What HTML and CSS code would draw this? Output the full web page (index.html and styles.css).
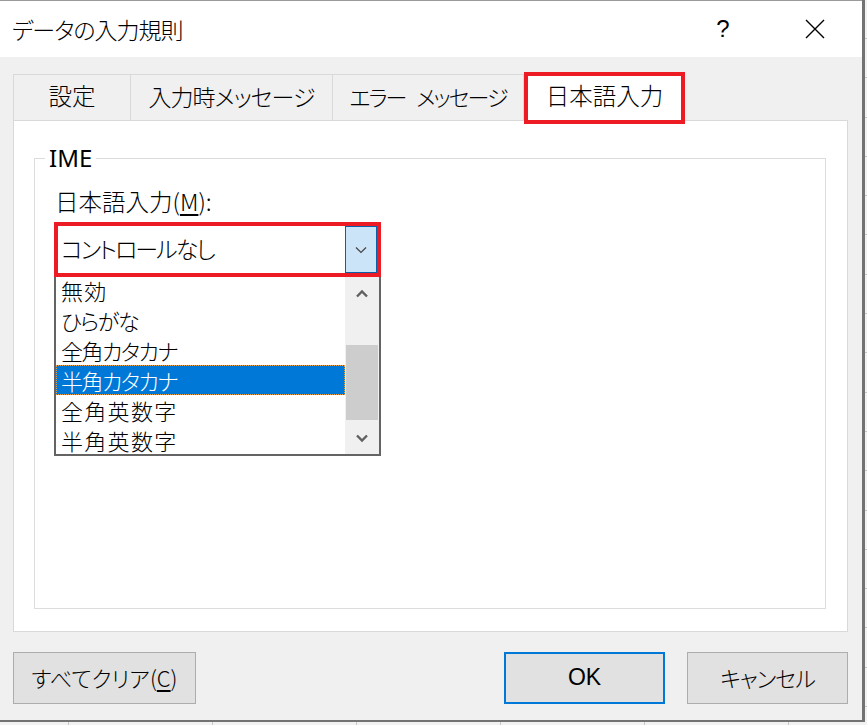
FILE: index.html
```html
<!DOCTYPE html>
<html lang="ja">
<head>
<meta charset="utf-8">
<title>データの入力規則</title>
<link rel="stylesheet" href="styles.css">
</head>
<body>
<div class="dialog">
  <div class="titlebar">
    <div class="title">データの入力規則</div>
    <div class="help">?</div>
    <div class="close">
      <svg width="20" height="20" viewBox="0 0 20 20"><path d="M1 1 L19 19 M19 1 L1 19" stroke="#000" stroke-width="1.4" fill="none"/></svg>
    </div>
  </div>
  <div class="body">
    <div class="tabs">
      <div class="tab tab-1">設定</div>
      <div class="tab tab-2">入力時メッセージ</div>
      <div class="tab tab-3">エラー メッセージ</div>
      <div class="tab tab-active">日本語入力</div>
    </div>
    <div class="panel">
      <div class="group">
        <div class="legend">IME</div>
        <div class="field-label">日本語入力(<u>M</u>):</div>
        <div class="combo">
          <div class="combo-text">コントロールなし</div>
          <div class="combo-btn">
            <svg width="12" height="8" viewBox="0 0 12 8"><path d="M1 1.5 L6 6.5 L11 1.5" stroke="#444" stroke-width="1.2" fill="none"/></svg>
          </div>
        </div>
        <div class="list">
          <div class="items">
            <div class="item">無効</div>
            <div class="item kana">ひらがな</div>
            <div class="item kana">全角カタカナ</div>
            <div class="item kana selected">半角カタカナ</div>
            <div class="item">全角英数字</div>
            <div class="item">半角英数字</div>
          </div>
          <div class="scrollbar">
            <div class="arrow">
              <svg width="14" height="9" viewBox="0 0 14 9"><path d="M2 7.5 L7 2.5 L12 7.5" stroke="#606060" stroke-width="2.4" fill="none"/></svg>
            </div>
            <div class="track">
              <div class="thumb"></div>
            </div>
            <div class="arrow">
              <svg width="14" height="9" viewBox="0 0 14 9"><path d="M2 1.5 L7 6.5 L12 1.5" stroke="#606060" stroke-width="2.4" fill="none"/></svg>
            </div>
          </div>
        </div>
      </div>
    </div>
    <div class="buttons">
      <div class="btn btn-clear">すべてクリア(<u>C</u>)</div>
      <div class="spacer"></div>
      <div class="btn btn-ok">OK</div>
      <div class="btn btn-cancel">キャンセル</div>
    </div>
  </div>
</div>
</body>
</html>
```
FILE: styles.css
```css
html, body {
  margin: 0;
  padding: 0;
}
body {
  width: 867px;
  height: 725px;
  overflow: hidden;
  background-color: #f2f2f2;
  background-image:
    repeating-linear-gradient(90deg, transparent 0 68px, #c8c8c8 68px 69px, transparent 69px 144px),
    repeating-linear-gradient(180deg, transparent 0 38px, #c8c8c8 38px 39px, transparent 39px 39.3px);
  font-family: "Noto Sans CJK JP", "Noto Sans", sans-serif;
  font-feature-settings: "palt";
  font-weight: 300;
  color: #000;
}
.dialog {
  width: 862px;
  height: 720px;
  border-right: 3px solid #737373;
  border-bottom: 2px solid #737373;
  display: flex;
  flex-direction: column;
  background: #f0f0f0;
}
.titlebar {
  height: 57px;
  flex: none;
  background: #fff;
  display: flex;
  align-items: center;
  padding-left: 12px;
  box-sizing: border-box;
  border-top: 1px solid #9a9a9a;
}
.title {
  font-size: 23px;
  letter-spacing: -1px;
  line-height: 1;
  flex: 1;
  padding-top: 1px;
}
.help {
  font-family: "Liberation Sans", sans-serif;
  font-weight: 400;
  font-size: 24px;
  width: 20px;
  text-align: center;
  margin-right: 72px;
}
.close {
  width: 20px;
  height: 20px;
  margin-right: 37px;
  display: flex;
}
.body {
  flex: 1;
  display: flex;
  flex-direction: column;
  padding: 0 14px 0 13px;
}
.tabs {
  display: flex;
  margin-top: 15px;
  height: 48px;
  align-items: flex-end;
  position: relative;
  z-index: 1;
}
.tab {
  height: 46px;
  box-sizing: border-box;
  border-top: 1px solid #d9d9d9;
  border-left: 1px solid #d9d9d9;
  display: flex;
  align-items: center;
  justify-content: center;
  font-size: 23.5px;
  line-height: 1;
  background: #f0f0f0;
  padding-bottom: 3px;
}
.tab-1 { width: 117px; }
.tab-2 { width: 202px; font-size: 23px; letter-spacing: -1px; }
.tab-3 {
  width: 192px;
  border-right: 1px solid #d9d9d9;
  font-size: 22px;
  letter-spacing: -2px;
  word-spacing: 8px;
}
.tab-active {
  width: 161px;
  height: 52px;
  margin-bottom: -4px;
  background: #fff;
  border: 4px solid #ed1c24;
  padding-bottom: 4px;
}
.panel {
  height: 512px;
  flex: none;
  box-sizing: border-box;
  background: #fff;
  border: 1px solid #d9d9d9;
  padding: 37px 21px 0 20px;
}
.group {
  height: 451px;
  box-sizing: border-box;
  border: 1px solid #dcdcdc;
  position: relative;
  padding: 26px 0 0 19px;
}
.legend {
  position: absolute;
  left: 10px;
  top: -15px;
  background: #fff;
  padding: 0 4px;
  font-size: 24px;
  line-height: 28px;
  font-family: "Noto Sans", sans-serif;
  font-weight: 400;
}
.field-label {
  font-size: 23.5px;
  line-height: 32px;
  margin-left: 1px;
  height: 37px;
}
.field-label u {
  text-underline-offset: 3px;
}
.combo {
  width: 327px;
  height: 55px;
  box-sizing: border-box;
  border: 4px solid #ed1c24;
  display: flex;
  align-items: stretch;
  background: #fff;
  position: relative;
  z-index: 1;
}
.combo-text {
  flex: 1;
  display: flex;
  align-items: center;
  font-size: 23px;
  letter-spacing: -2px;
  padding-left: 3px;
  padding-bottom: 3px;
}
.combo-btn {
  width: 32px;
  box-sizing: border-box;
  border: 1px solid #0c5ea8;
  background: #cce4f7;
  display: flex;
  align-items: center;
  justify-content: center;
}
.list {
  width: 327px;
  height: 181px;
  margin-top: -2px;
  box-sizing: border-box;
  border: 2px solid #646464;
  border-top: none;
  display: flex;
  background: #fff;
}
.items {
  flex: 1;
  display: flex;
  flex-direction: column;
}
.item {
  height: 30px;
  line-height: 30px;
  font-size: 22px;
  letter-spacing: 1.3px;
  padding-left: 5px;
  box-sizing: border-box;
  white-space: nowrap;
}
.item.kana {
  letter-spacing: -1.5px;
}
.item.selected {
  background: #0078d7;
  color: #fff;
  outline: 1px dotted #e9a04a;
  outline-offset: -1px;
}
.scrollbar {
  width: 34px;
  background: #f0f0f0;
  display: flex;
  flex-direction: column;
}
.arrow {
  height: 36px;
  display: flex;
  align-items: center;
  justify-content: center;
  flex: none;
}
.track {
  flex: 1;
  display: flex;
  flex-direction: column;
  padding-top: 34px;
}
.thumb {
  height: 75px;
  margin: 0 1px;
  background: #cdcdcd;
}
.buttons {
  display: flex;
  margin-top: 20px;
  height: 52px;
  gap: 22px;
}
.spacer {
  flex: 1;
}
.btn {
  height: 52px;
  box-sizing: border-box;
  background: #e1e1e1;
  border: 1px solid #adadad;
  display: flex;
  align-items: center;
  justify-content: center;
  font-size: 22px;
  line-height: 1;
  padding-bottom: 2px;
}
.btn u {
  text-underline-offset: 3px;
}
.btn-clear {
  width: 183px;
}
.btn-ok {
  width: 161px;
  border: 2px solid #0078d7;
  font-family: "Liberation Sans", "Noto Sans CJK JP", sans-serif;
  font-weight: 400;
  font-size: 23px;
}
.btn-cancel {
  width: 161px;
  letter-spacing: -1px;
}
```
